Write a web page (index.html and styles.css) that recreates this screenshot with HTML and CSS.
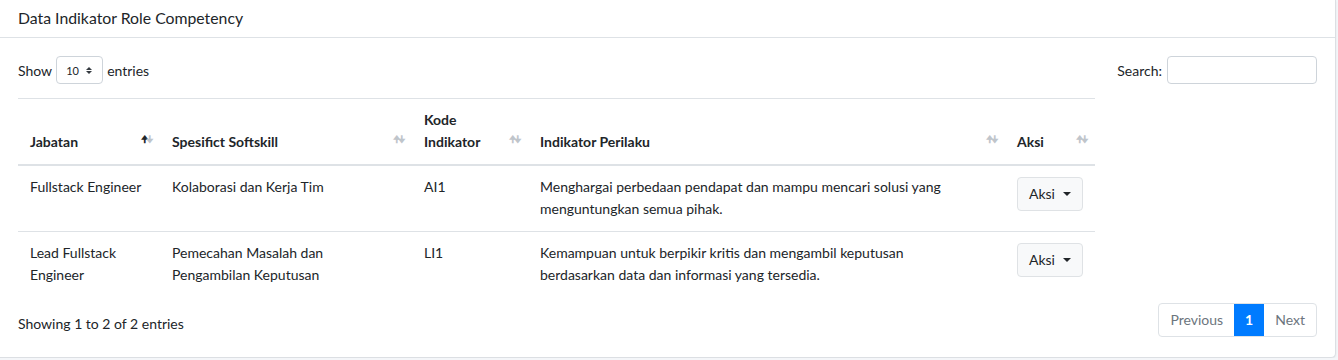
FILE: index.html
```html
<!DOCTYPE html>
<html lang="id">
<head>
    <meta charset="UTF-8">
    <title>Data Indikator Role Competency</title>
    <link rel="stylesheet" href="styles.css">
</head>
<body>
    <div class="card">
        <div class="card-header">Data Indikator Role Competency</div>
        <div class="card-body">
            <div class="dt-top">
                <div class="dt-length">
                    Show
                    <span class="select">10 <span class="arrows"><i class="up"></i><i class="down"></i></span></span>
                    entries
                </div>
                <div class="dt-search">
                    Search: <span class="search-input"></span>
                </div>
            </div>
            <table class="dt-table">
                <thead>
                    <tr>
                        <th class="c1">Jabatan <span class="sort"><b class="on">&#129033;</b><b>&#129035;</b></span></th>
                        <th class="c2">Spesifict Softskill <span class="sort"><b>&#129033;</b><b>&#129035;</b></span></th>
                        <th class="c3">Kode<br>Indikator <span class="sort"><b>&#129033;</b><b>&#129035;</b></span></th>
                        <th class="c4">Indikator Perilaku <span class="sort"><b>&#129033;</b><b>&#129035;</b></span></th>
                        <th class="c5">Aksi <span class="sort"><b>&#129033;</b><b>&#129035;</b></span></th>
                    </tr>
                </thead>
                <tbody>
                    <tr>
                        <td>Fullstack Engineer</td>
                        <td>Kolaborasi dan Kerja Tim</td>
                        <td>AI1</td>
                        <td class="desc">Menghargai perbedaan pendapat dan mampu mencari solusi yang menguntungkan semua pihak.</td>
                        <td><span class="btn">Aksi <i class="caret"></i></span></td>
                    </tr>
                    <tr>
                        <td>Lead Fullstack Engineer</td>
                        <td>Pemecahan Masalah dan Pengambilan Keputusan</td>
                        <td>LI1</td>
                        <td class="desc">Kemampuan untuk berpikir kritis dan mengambil keputusan berdasarkan data dan informasi yang tersedia.</td>
                        <td><span class="btn">Aksi <i class="caret"></i></span></td>
                    </tr>
                </tbody>
            </table>
            <div class="dt-bottom">
                <div class="dt-info">Showing 1 to 2 of 2 entries</div>
                <div class="pagination">
                    <span class="page">Previous</span>
                    <span class="page active">1</span>
                    <span class="page">Next</span>
                </div>
            </div>
        </div>
    </div>
</body>
</html>
```

FILE: styles.css
```css
body {
    font-family: 'Lato', sans-serif;
    font-size: 14px;
    background-color: #f4f6f9;
    color: #212529;
    margin: 0;
    padding: 0;
}

.card {
    width: 1336px;
    height: 358px;
    box-sizing: border-box;
    background: #ffffff;
    border-right: 1px solid #dcdfe3;
    border-bottom: 1px solid #dcdfe3;
    border-radius: 0 0 5px 0;
    box-shadow: 0 1px 2px rgba(0, 0, 0, 0.08);
}

.card-header {
    height: 38px;
    box-sizing: border-box;
    padding: 8px 18px 0;
    font-size: 15.8px;
    border-bottom: 1px solid #dee2e6;
}

.card-body {
    padding: 18px 18px 0;
}

.dt-top {
    display: flex;
    justify-content: space-between;
    align-items: center;
    height: 28px;
}

.dt-length {
    display: flex;
    align-items: center;
    gap: 4px;
}

.select {
    display: inline-flex;
    align-items: center;
    justify-content: space-between;
    width: 47px;
    height: 28px;
    box-sizing: border-box;
    padding: 0 10px 0 9px;
    border: 1px solid #ced4da;
    border-radius: 4px;
    font-size: 11px;
}

.arrows {
    display: flex;
    flex-direction: column;
    gap: 1px;
}

.arrows i {
    width: 0;
    height: 0;
    border-left: 3px solid transparent;
    border-right: 3px solid transparent;
}

.arrows .up {
    border-bottom: 3px solid #343a40;
}

.arrows .down {
    border-top: 3px solid #343a40;
}

.dt-search {
    display: flex;
    align-items: center;
    gap: 5px;
}

.search-input {
    display: block;
    width: 150px;
    height: 28px;
    box-sizing: border-box;
    border: 1px solid #ced4da;
    border-radius: 4px;
}

.dt-table {
    width: 1077px;
    margin-top: 14px;
    border-collapse: collapse;
    border-top: 1px solid #dee2e6;
}

.dt-table th {
    position: relative;
    text-align: left;
    vertical-align: bottom;
    font-weight: 700;
    padding: 10px 30px 11px 12px;
    line-height: 22px;
    border-bottom: 2px solid #dee2e6;
}

.c1 { width: 100px; }
.c2 { width: 210px; }
.c3 { width: 74px; }
.c4 { width: 435px; }

.sort {
    position: absolute;
    right: 9px;
    bottom: 14px;
    font-size: 9px;
    color: #bfc5cb;
    letter-spacing: -2px;
}

.sort b {
    font-weight: 700;
}

.sort .on {
    color: #212529;
}

.dt-table td {
    vertical-align: top;
    padding: 10px 12px 11px;
    line-height: 22px;
    border-top: 1px solid #dee2e6;
}

.dt-table td.desc {
    padding-right: 36px;
}

.dt-table tbody tr:first-child td {
    border-top: none;
}

.btn {
    display: inline-flex;
    align-items: center;
    gap: 8px;
    height: 34px;
    box-sizing: border-box;
    padding: 0 11px;
    background: #f8f9fa;
    border: 1px solid #dfe2e5;
    border-radius: 4px;
    margin-top: 1px;
}

.caret {
    width: 0;
    height: 0;
    border-left: 4px solid transparent;
    border-right: 4px solid transparent;
    border-top: 4px solid #212529;
}

.dt-bottom {
    display: flex;
    justify-content: space-between;
    align-items: center;
    margin-top: 6px;
}

.dt-info {
    padding-top: 6px;
}

.pagination {
    display: flex;
    border: 1px solid #dee2e6;
    border-radius: 4px;
    overflow: hidden;
}

.page {
    display: block;
    height: 32px;
    line-height: 32px;
    padding: 0 11px;
    color: #6c757d;
}

.page.active {
    background: #007bff;
    color: #ffffff;
    font-weight: 700;
}
```
